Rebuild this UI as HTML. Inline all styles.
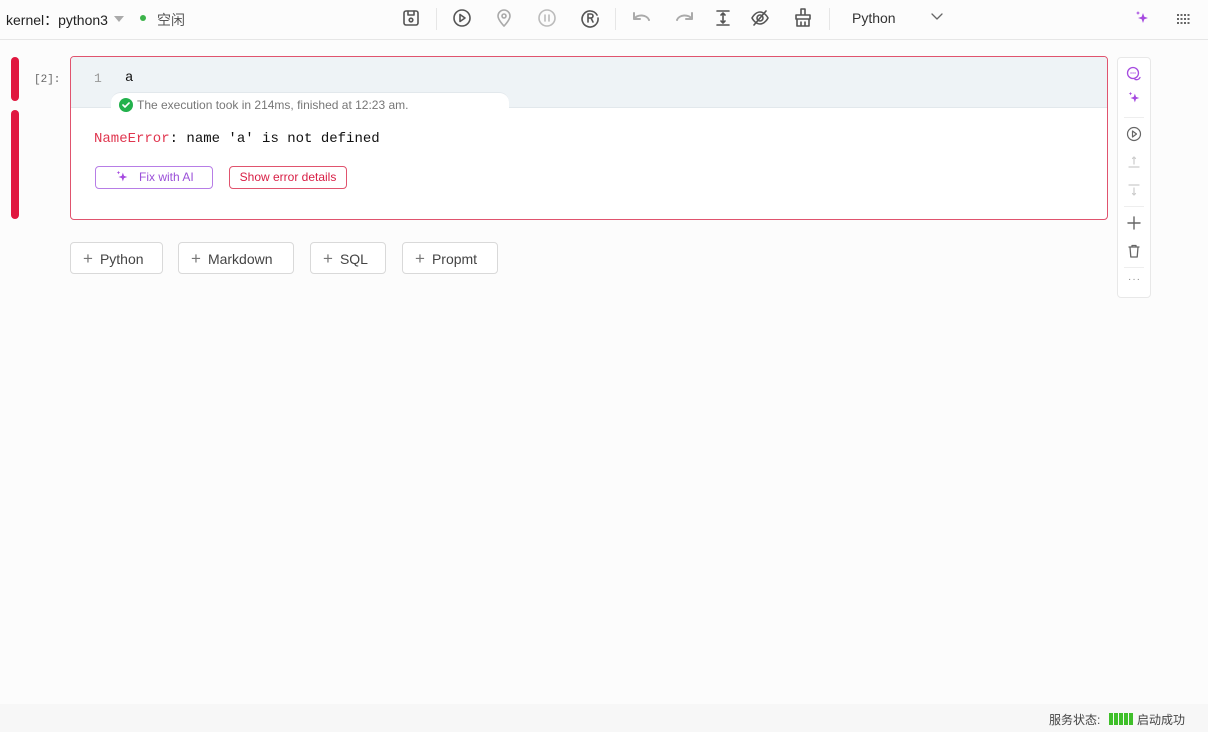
<!DOCTYPE html><html><head><meta charset="utf-8"><style>
body{margin:0;width:1208px;height:732px;background:#fcfcfc;font-family:"Liberation Sans","Noto Sans CJK SC",sans-serif;position:relative;overflow:hidden;color:#333}
.a{position:absolute}
svg{position:absolute;fill:none;stroke:#555;stroke-width:1.6;stroke-linecap:round;stroke-linejoin:round}
.btn{position:absolute;top:242px;height:32px;border:1px solid #d9d9d9;border-radius:4px;background:#fff;font-size:14px;color:#444;line-height:31px;box-sizing:border-box;padding-left:12px}
.btn b{font-weight:normal;color:#777;font-size:17px;margin-right:7px}
.mono{font-family:"Liberation Mono",monospace}
</style></head><body>
<div class="a" style="left:0;top:0;width:1208px;height:39px;border-bottom:1px solid #e6e6e6;background:#fcfcfc"></div>
<div class="a" style="left:6px;top:10px;font-size:14px;color:#222">kernel：python3</div>
<div class="a" style="left:114px;top:16px;width:0;height:0;border-left:5px solid transparent;border-right:5px solid transparent;border-top:6px solid #aaa"></div>
<div class="a" style="left:140px;top:15px;width:6px;height:6px;border-radius:50%;background:#3cb34a"></div>
<div class="a" style="left:157px;top:10px;font-size:14px;color:#555">空闲</div>
<svg style="left:402px;top:9px" width="18" height="18" viewBox="0 0 18 18"><rect x="2" y="2" width="14" height="14" rx="2"/><path d="M6 2v4h6V2"/><circle cx="9" cy="11" r="1.8"/></svg>
<div class="a" style="left:436px;top:8px;width:1px;height:22px;background:#e6e6e6"></div>
<svg style="left:452px;top:8px" width="20" height="20" viewBox="0 0 20 20"><circle cx="10" cy="10" r="8"/><path d="M8 6.5v7l5-3.5z"/></svg>
<svg style="left:494px;top:8px;stroke:#aaa" width="20" height="20" viewBox="0 0 20 20"><path d="M10 18s-6-6-6-10a6 6 0 0 1 12 0c0 4-6 10-6 10z"/><circle cx="10" cy="8" r="2"/></svg>
<svg style="left:537px;top:8px;stroke:#bbb" width="20" height="20" viewBox="0 0 20 20"><circle cx="10" cy="10" r="8"/><path d="M8 7v6M12 7v6"/></svg>
<svg style="left:580px;top:8px" width="20" height="20" viewBox="0 0 20 20"><path d="M17 7A8 8 0 1 0 18 10"/><path d="M8 14V6h3a2 2 0 0 1 0 4H8M11 10l2 4"/></svg>
<div class="a" style="left:615px;top:8px;width:1px;height:22px;background:#e6e6e6"></div>
<svg style="left:630px;top:9px;stroke:#aaa;stroke-width:2" width="22" height="18" viewBox="0 0 22 18"><path d="M4 4v6h6M4 10a8 6 0 0 1 15 1"/></svg>
<svg style="left:674px;top:9px;stroke:#aaa;stroke-width:2" width="22" height="18" viewBox="0 0 22 18"><path d="M18 4v6h-6M18 10a8 6 0 0 0-15 1"/></svg>
<svg style="left:714px;top:9px" width="18" height="18" viewBox="0 0 18 18"><path d="M3 2h12M3 16h12M9 4v10M7 6l2-2 2 2M7 12l2 2 2-2"/></svg>
<svg style="left:750px;top:8px" width="20" height="20" viewBox="0 0 20 20"><path d="M2 10s3-6 8-6 8 6 8 6-3 6-8 6-8-6-8-6z"/><circle cx="10" cy="10" r="3"/><path d="M4 17L16 3"/></svg>
<svg style="left:793px;top:7px" width="20" height="21" viewBox="0 0 20 21"><path d="M8 2h4v6H8zM3 8h14v4H3zM4 12v7h12v-7M8 19v-4M12 19v-4"/></svg>
<div class="a" style="left:829px;top:8px;width:1px;height:22px;background:#e6e6e6"></div>
<div class="a" style="left:852px;top:10px;font-size:14px;color:#333">Python</div>
<svg style="left:931px;top:12px;stroke:#666;stroke-width:1.3" width="12" height="10" viewBox="0 0 12 10"><path d="M1 2l5 5 5-5"/></svg>
<svg style="left:1134px;top:10px;fill:#a64be0;stroke:none" width="16" height="16" viewBox="0 0 16 16"><path d="M9 3l1.3 3.7L14 8l-3.7 1.3L9 13l-1.3-3.7L4 8l3.7-1.3z"/><path d="M4 1l.6 1.4L6 3l-1.4.6L4 5l-.6-1.4L2 3l1.4-.6z"/></svg>
<div class="a" style="left:1177px;top:14px;width:13px;height:10px;background:repeating-linear-gradient(90deg,#666 0 2px,transparent 2px 3.5px);-webkit-mask:repeating-linear-gradient(180deg,#000 0 2px,transparent 2px 4px);mask:repeating-linear-gradient(180deg,#000 0 2px,transparent 2px 4px)"></div>
<div class="a" style="left:11px;top:57px;width:8px;height:44px;border-radius:4px;background:#e0173f"></div>
<div class="a" style="left:11px;top:110px;width:8px;height:109px;border-radius:4px;background:#e0173f"></div>
<div class="a mono" style="left:34px;top:74px;font-size:11px;color:#666">[2]:</div>
<div class="a" style="left:70px;top:56px;width:1038px;height:164px;border:1.5px solid #e0536e;border-radius:4px;box-sizing:border-box;background:#fff;overflow:hidden">
<div class="a" style="left:0;top:0;width:100%;height:50px;background:#eef3f6;border-bottom:1px solid #e2e8ec"></div>
<div class="a" style="left:40px;top:35px;width:398px;height:20px;background:#fff;border-radius:10px 10px 0 0;border-top:1px solid #e2e8ec"></div>
</div>
<div class="a mono" style="left:94px;top:71px;font-size:13px;color:#999">1</div>
<div class="a mono" style="left:125px;top:70px;font-size:14px;color:#111">a</div>
<div class="a" style="left:119px;top:98px;width:14px;height:14px;border-radius:50%;background:#22b14c"></div>
<svg style="left:121px;top:100px;stroke:#fff;stroke-width:1.6" width="10" height="10" viewBox="0 0 10 10"><path d="M2 5l2 2 4-4"/></svg>
<div class="a" style="left:137px;top:98px;font-size:12px;color:#777">The execution took in 214ms, finished at 12:23 am.</div>
<div class="a mono" style="left:94px;top:131px;font-size:14px;color:#111"><span style="color:#e0364f">NameError</span>: name 'a' is not defined</div>
<div class="a" style="left:95px;top:166px;width:118px;height:23px;border:1px solid #b77de6;border-radius:4px;box-sizing:border-box;font-size:12px;color:#9b50d8;line-height:21px;padding-left:43px">Fix with AI</div>
<svg style="left:115px;top:170px;fill:#a64be0;stroke:none" width="14" height="14" viewBox="0 0 16 16"><path d="M9 3l1.3 3.7L14 8l-3.7 1.3L9 13l-1.3-3.7L4 8l3.7-1.3z"/><path d="M4 1l.6 1.4L6 3l-1.4.6L4 5l-.6-1.4L2 3l1.4-.6z"/></svg>
<div class="a" style="left:229px;top:166px;width:118px;height:23px;border:1px solid #e0536e;border-radius:4px;box-sizing:border-box;font-size:12px;color:#d81e45;line-height:21px;text-align:center">Show error details</div>
<div class="btn" style="left:70px;width:93px"><b>+</b>Python</div>
<div class="btn" style="left:178px;width:116px"><b>+</b>Markdown</div>
<div class="btn" style="left:310px;width:76px"><b>+</b>SQL</div>
<div class="btn" style="left:402px;width:96px"><b>+</b>Propmt</div>
<div class="a" style="left:1117px;top:57px;width:34px;height:241px;border:1px solid #e8e8e8;border-radius:4px;box-sizing:border-box;background:#fff"></div>
<svg style="left:1126px;top:66px;stroke:#a64be0;stroke-width:1.3" width="16" height="16" viewBox="0 0 16 16"><circle cx="7" cy="7" r="5.5"/><path d="M9 13.5c2 .5 4 0 5-2M5 7h.1M7 7h.1M9 7h.1"/></svg>
<svg style="left:1127px;top:91px;fill:#a64be0;stroke:none" width="14" height="14" viewBox="0 0 16 16"><path d="M9 3l1.3 3.7L14 8l-3.7 1.3L9 13l-1.3-3.7L4 8l3.7-1.3z"/><path d="M4 1l.6 1.4L6 3l-1.4.6L4 5l-.6-1.4L2 3l1.4-.6z"/></svg>
<div class="a" style="left:1124px;top:117px;width:20px;height:1px;background:#eee"></div>
<svg style="left:1126px;top:126px;stroke:#666;stroke-width:1.2" width="16" height="16" viewBox="0 0 16 16"><circle cx="8" cy="8" r="6.5"/><path d="M6.5 5v6l4-3z"/></svg>
<svg style="left:1127px;top:155px;stroke:#ccc;stroke-width:1.2" width="14" height="14" viewBox="0 0 14 14"><path d="M2 12h10M7 9V2M5.5 3.5L7 2l1.5 1.5"/></svg>
<svg style="left:1127px;top:183px;stroke:#ccc;stroke-width:1.2" width="14" height="14" viewBox="0 0 14 14"><path d="M2 2h10M7 5v7M5.5 10.5L7 12l1.5-1.5"/></svg>
<div class="a" style="left:1124px;top:206px;width:20px;height:1px;background:#eee"></div>
<svg style="left:1127px;top:216px;stroke:#666;stroke-width:1.4" width="14" height="14" viewBox="0 0 14 14"><path d="M7 1v12M1 7h12"/></svg>
<svg style="left:1127px;top:244px;stroke:#666;stroke-width:1.3" width="14" height="14" viewBox="0 0 14 14"><path d="M2 3h10M5 3V1.5h4V3M3 3l.8 10h6.4L11 3"/></svg>
<div class="a" style="left:1124px;top:267px;width:20px;height:1px;background:#eee"></div>
<div class="a" style="left:1128px;top:274px;font-size:10px;color:#888;letter-spacing:1px">···</div>
<div class="a" style="left:0;top:704px;width:1208px;height:28px;background:#f7f7f7"></div>
<div class="a" style="left:1049px;top:711px;font-size:12px;color:#444">服务状态:</div>
<div class="a" style="left:1109px;top:713px;width:24px;height:12px;background:repeating-linear-gradient(90deg,#3fbf2a 0 4px,transparent 4px 5px)"></div>
<div class="a" style="left:1137px;top:711px;font-size:12px;color:#444">启动成功</div>
</body></html>
